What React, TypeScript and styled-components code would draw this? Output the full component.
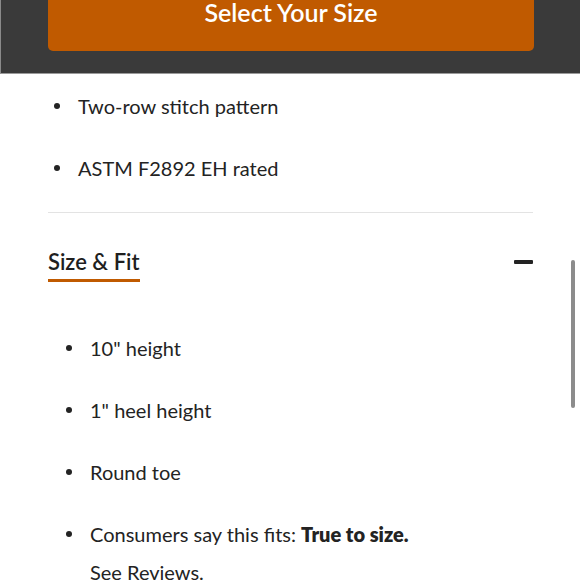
import React from "react";
import styled, { createGlobalStyle } from "styled-components";

const GlobalStyle = createGlobalStyle`
  html, body {
    margin: 0;
    padding: 0;
    background: #ffffff;
  }
  body {
    font-family: Lato, "Open Sans", sans-serif;
    color: #232323;
    overflow: hidden;
  }
`;

const topFeatures = ["Two-row stitch pattern", "ASTM F2892 EH rated"];
const fitItems = ['10" height', '1" heel height', "Round toe"];

const App: React.FC = () => {
  return (
    <Page>
      <GlobalStyle />
      <StickyBar>
        <SizeButton>Select Your Size</SizeButton>
      </StickyBar>

      <Content>
        <List $indent={0} $top={21}>
          {topFeatures.map((f) => (
            <Item key={f}>{f}</Item>
          ))}
        </List>

        <Divider />

        <SectionHeader>
          <SectionTitle>Size &amp; Fit</SectionTitle>
          <Minus />
        </SectionHeader>

        <List $indent={12} $top={55}>
          {fitItems.map((f) => (
            <Item key={f}>{f}</Item>
          ))}
          <Item>
            Consumers say this fits: <strong>True to size.</strong>
            <SeeReviews>See Reviews.</SeeReviews>
          </Item>
        </List>
      </Content>

      <ScrollThumb />
    </Page>
  );
};

const Page = styled.div`
  position: relative;
  width: 580px;
  height: 580px;
  overflow: hidden;
`;

const StickyBar = styled.div`
  display: flex;
  flex-direction: column;
  height: 74px;
  background: #3a3a3a;
  border-left: 1px solid #8a8a8a;
  border-bottom: 1px solid #9a9a9a;
  padding: 0 46px 0 47px;
  box-sizing: border-box;
`;

const SizeButton = styled.button`
  display: block;
  width: 100%;
  height: 61px;
  margin-top: -10px;
  border: none;
  border-radius: 5px;
  background: #c05a00;
  color: #ffffff;
  font-family: Lato, "Open Sans", sans-serif;
  font-size: 25px;
  font-weight: 600;
  padding: 0 0 17px;
  line-height: 25px;
`;

const Content = styled.div`
  padding: 0 47px 0 48px;
`;

const List = styled.ul<{ $indent: number; $top: number }>`
  list-style: none;
  margin: 0;
  padding: ${(p) => p.$top}px 0 0 ${(p) => p.$indent}px;
`;

const Item = styled.li`
  position: relative;
  padding-left: 30px;
  font-size: 20px;
  line-height: 22px;
  margin-bottom: 40px;

  &::before {
    content: "";
    position: absolute;
    left: 6px;
    top: 8px;
    width: 6px;
    height: 6px;
    border-radius: 50%;
    background: #232323;
  }

  strong {
    font-weight: 800;
  }
`;

const SeeReviews = styled.span`
  display: block;
  margin-top: 16px;
`;

const Divider = styled.hr`
  border: none;
  border-top: 1px solid #e3e3e3;
  margin: -7px 0 0;
`;

const SectionHeader = styled.div`
  display: flex;
  align-items: center;
  justify-content: space-between;
  padding-top: 36px;
`;

const SectionTitle = styled.h2`
  margin: 0;
  font-size: 22px;
  font-weight: 600;
  line-height: 26px;
  padding-bottom: 4px;
  border-bottom: 3px solid #c05a00;
  color: #1f1f1f;
`;

const Minus = styled.span`
  display: block;
  width: 19px;
  height: 4px;
  border-radius: 1px;
  background: #232323;
  margin-bottom: 8px;
`;

const ScrollThumb = styled.div`
  position: absolute;
  left: 571px;
  top: 260px;
  width: 4px;
  height: 148px;
  border-radius: 2px;
  background: #8c8c8c;
`;

export default App;
